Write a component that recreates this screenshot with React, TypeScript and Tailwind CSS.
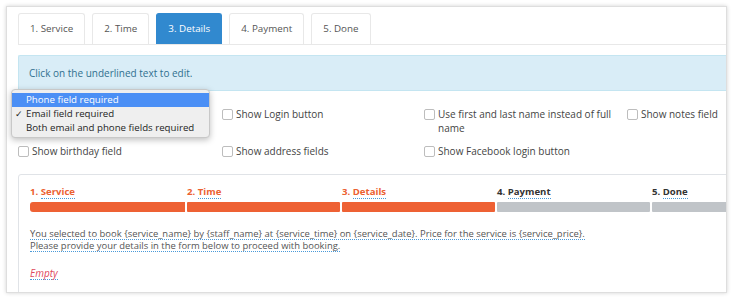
import React from "react";

const tabs = ["1. Service", "2. Time", "3. Details", "4. Payment", "5. Done"];

function Box() {
  return <span className="mt-[2px] h-[11px] w-[11px] shrink-0 rounded-[2px] border border-[#bdbdbd] bg-white" />;
}

function Check({ label, textClass = "" }: { label: string; textClass?: string }) {
  return (
    <div className="flex items-start gap-[3px]">
      <Box />
      <span className={"leading-[14px] text-[#444] " + textClass}>{label}</span>
    </div>
  );
}

const steps = [
  { n: "1.", t: "Service", on: true, w: "w-[157px]" },
  { n: "2.", t: "Time", on: true, w: "w-[155px]" },
  { n: "3.", t: "Details", on: true, w: "w-[155px]" },
  { n: "4.", t: "Payment", on: false, w: "w-[155px]" },
  { n: "5.", t: "Done", on: false, w: "w-[155px]" },
];

export default function App() {
  return (
    <div
      className="relative h-[300px] w-[734px] overflow-hidden bg-white pl-[6px] pt-[6px] text-[10px]"
      style={{ fontFamily: '"Open Sans", "Liberation Sans", sans-serif' }}
    >
      <div className="h-[287px] w-[721px] overflow-hidden border border-[#dedede] bg-white pl-[11px] pt-[6px] shadow-[0_0_4px_rgba(0,0,0,0.18)]">
        <div className="flex gap-[7px] border-b border-[#e8e8e8]">
          {tabs.map((t, i) => (
            <div
              key={t}
              className={
                "flex h-[31px] items-center rounded-t-[3px] border border-b-0 px-[11px] text-[9.8px] leading-none " +
                (i === 2
                  ? "border-[#3189cf] bg-[#3189cf] text-white"
                  : "border-[#e8e8e8] text-[#555]")
              }
            >
              {t}
            </div>
          ))}
        </div>

        <div className="mt-[10px] flex h-[36px] items-center rounded-l-[2px] border border-r-0 border-[#c4e5f1] bg-[#d9edf7] pl-[10px] text-[#31708f]">
          Click on the underlined text to edit.
        </div>

        <div className="mt-[16px] grid grid-cols-[204px_202px_203px_203px] gap-y-[9px]">
          <div className="h-[28px]" />
          <Check label="Show Login button" />
          <Check label="Use first and last name instead of full name" textClass="w-[182px]" />
          <Check label="Show notes field" />
          <Check label="Show birthday field" />
          <Check label="Show address fields" />
          <Check label="Show Facebook login button" />
          <div />
        </div>

        <div className="mt-[16px] w-[800px] rounded-[3px] border border-[#e0e3e7] pl-[11px] pt-[11px] pb-[20px]">
          <div className="flex">
            {steps.map((s) => (
              <div key={s.t} className={s.w + " shrink-0"}>
                <div className={"text-[9.6px] font-bold leading-[12px] " + (s.on ? "text-[#ec6131]" : "text-[#333]")}>
                  {s.n} <span className="border-b border-dotted border-[#4a9ad8]">{s.t}</span>
                </div>
                <div
                  className={
                    "mt-[4px] h-[10px] w-[calc(100%-2px)] " +
                    (s.n === "1." ? "rounded-l-[3px] " : "rounded-[1px] ") +
                    (s.on ? "bg-[#ee6134]" : "bg-[#c0c4c8]")
                  }
                />
              </div>
            ))}
          </div>
          <div className="mt-[15px] text-[9.45px] text-[#555]">
            <div className="h-[12px]">
              <span className="inline-block border-b border-dotted border-[#4a9ad8] leading-[11px]">
                You selected to book {"{service_name}"} by {"{staff_name}"} at {"{service_time}"} on {"{service_date}"}. Price for the service is {"{service_price}"}.
              </span>
            </div>
            <div className="h-[12px]">
              <span className="inline-block border-b border-dotted border-[#4a9ad8] leading-[11px]">
                Please provide your details in the form below to proceed with booking.
              </span>
            </div>
          </div>
          <div className="mt-[15px] h-[12px]">
            <span className="inline-block border-b border-dotted border-[#4a9ad8] italic leading-[11px] text-[#e0475c]">Empty</span>
          </div>
        </div>
      </div>

      <div className="absolute left-[11px] top-[89px] h-[49px] w-[199px] rounded-[4px] border border-[#c8c8c8] bg-[#efefef] pt-[3px] text-[9.7px] text-[#1e1e1e] shadow-[0_2px_6px_rgba(0,0,0,0.25)]">
        <div className="flex h-[14px] items-center bg-[#4b8ff5] pl-[14px] text-white">Phone field required</div>
        <div className="relative flex h-[14px] items-center pl-[14px]">
          <span className="absolute left-[3px] text-[9px]">✓</span>
          Email field required
        </div>
        <div className="flex h-[14px] items-center pl-[14px]">Both email and phone fields required</div>
      </div>
    </div>
  );
}
